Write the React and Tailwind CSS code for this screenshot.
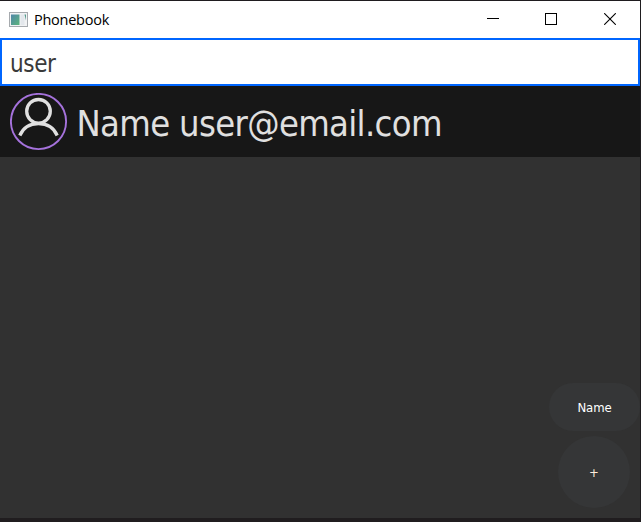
const uiFont = "font-['DejaVu_Sans_Condensed','DejaVu_Sans',sans-serif] [font-stretch:condensed]";

function AppIcon() {
  return (
    <svg width="19" height="16" viewBox="0 0 19 16" aria-hidden="true">
      <defs>
        <linearGradient id="screen" x1="0" y1="0" x2="1" y2="1">
          <stop offset="0" stopColor="#4f86a8" />
          <stop offset="1" stopColor="#5cb57c" />
        </linearGradient>
      </defs>
      <rect x="0.5" y="0.5" width="18" height="14" fill="#f1f2f4" stroke="#a6aaae" />
      <rect x="2" y="2.5" width="8.5" height="10.5" fill="url(#screen)" />
      <rect x="11.5" y="2.5" width="4" height="10.5" fill="#e3e7ec" />
      <path d="M15.5 2.5H17V8.5Z" fill="#559a8c" />
    </svg>
  );
}

function TitleBar() {
  return (
    <header className="flex h-[38px] shrink-0 items-center border-t border-[#1f1c1f] bg-white pl-[9px]">
      <AppIcon />
      <span className="ml-[6px] flex-1 font-['Open_Sans',sans-serif] text-[14.5px] tracking-[-0.25px] text-black">
        Phonebook
      </span>
      <button className="flex w-[58px] justify-center pb-px" aria-label="Minimize">
        <svg width="12" height="12" shapeRendering="crispEdges">
          <path d="M0 5.5H12" stroke="#000" />
        </svg>
      </button>
      <button className="flex w-[58px] justify-center pb-px" aria-label="Maximize">
        <svg width="12" height="12" shapeRendering="crispEdges">
          <rect x="0.5" y="0.5" width="11" height="11" fill="none" stroke="#000" />
        </svg>
      </button>
      <button className="flex w-[60px] justify-center pb-px" aria-label="Close">
        <svg width="12" height="12">
          <path d="M0.2 0.2L11.8 11.8M11.8 0.2L0.2 11.8" stroke="#000" strokeWidth="1.1" />
        </svg>
      </button>
    </header>
  );
}

function Avatar() {
  return (
    <svg width="58" height="58" viewBox="0 0 58 58" fill="none" aria-hidden="true">
      <circle cx="28.5" cy="28.5" r="27.6" stroke="#a572dc" strokeWidth="1.9" />
      <circle cx="28.5" cy="18.3" r="11.8" stroke="#e0e0e0" strokeWidth="3.3" />
      <path d="M9.8 42.5C13 35 20 30.6 28.5 30.6S44 35 47.2 42.5" stroke="#e0e0e0" strokeWidth="3.3" />
    </svg>
  );
}

export default function App() {
  return (
    <div className="flex h-[522px] w-[641px] flex-col overflow-hidden border-r border-[#1f1d1f] bg-[#313131]">
      <TitleBar />
      <div className="flex h-12 shrink-0 items-center border-2 border-[#0066ff] bg-white pt-[3px] pl-2">
        <span className={`${uiFont} text-[24px] leading-none tracking-[-0.4px] text-[#3a3a3a]`}>user</span>
      </div>
      <div className="flex h-[71px] shrink-0 items-center bg-[#171717] pl-[10px]">
        <Avatar />
        <span className={`${uiFont} ml-[8.5px] pt-1 whitespace-nowrap text-[36px] leading-none tracking-[-0.65px] text-[#e0e0e0]`}>
          Name user@email.com
        </span>
      </div>
      <main className="flex flex-1 flex-col items-end justify-end pb-[10px]">
        <button className={`${uiFont} h-12 w-[91px] rounded-full bg-[#353637] pt-0.5 text-[13px] tracking-[-0.1px] text-white`}>
          Name
        </button>
        <button className={`${uiFont} mt-[5px] mr-[10px] h-[72px] w-[72px] rounded-full bg-[#353637] pt-0.5 text-[13px] text-[#ffeedd]`}>
          +
        </button>
      </main>
      <div className="h-1 shrink-0 bg-[#201d1f]" />
    </div>
  );
}
